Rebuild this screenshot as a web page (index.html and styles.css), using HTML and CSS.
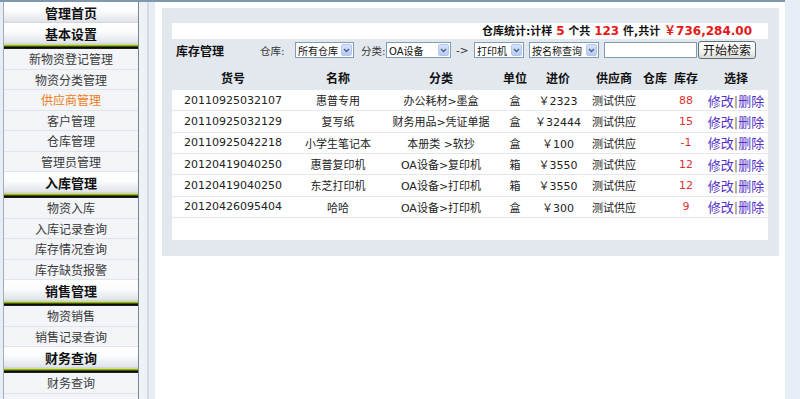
FILE: index.html
```html
<!DOCTYPE html>
<html lang="zh-CN">
<head>
    <meta charset="UTF-8">
    <meta name="viewport" content="width=device-width, initial-scale=1.0">
    <title>库存管理</title>
    <link rel="stylesheet" href="styles.css">
</head>
<body>
    <div class="page">
        <!-- left menu -->
        <div class="side">
            <div class="side-head">管理首页</div>
            <div class="side-head">基本设置</div>
            <div class="side-bar"></div>
            <ul class="side-menu">
                <li>新物资登记管理</li>
                <li>物资分类管理</li>
                <li class="active">供应商管理</li>
                <li>客户管理</li>
                <li>仓库管理</li>
                <li>管理员管理</li>
            </ul>
            <div class="side-head">入库管理</div>
            <div class="side-bar"></div>
            <ul class="side-menu">
                <li>物资入库</li>
                <li>入库记录查询</li>
                <li>库存情况查询</li>
                <li>库存缺货报警</li>
            </ul>
            <div class="side-head">销售管理</div>
            <div class="side-bar"></div>
            <ul class="side-menu">
                <li>物资销售</li>
                <li>销售记录查询</li>
            </ul>
            <div class="side-head">财务查询</div>
            <div class="side-bar"></div>
            <ul class="side-menu">
                <li>财务查询</li>
            </ul>
        </div>

        <div class="gutter"></div>

        <div class="main">
            <div class="panel">
                <div class="stats">仓库统计:计样 <em>5</em> 个共 <em>123</em> 件,共计 <em>￥736,284.00</em></div>

                <div class="search">
                    <span class="title">库存管理</span>
                    <span class="lbl lbl-store">仓库:</span>
                    <span class="sel w59"><span class="sel-text">所有仓库</span><span class="sel-btn"><svg width="7" height="5" viewBox="0 0 7 5"><polyline points="1,1 3.5,3.5 6,1" fill="none" stroke="#4d6185" stroke-width="1.4"/></svg></span></span>
                    <span class="lbl lbl-cat">分类:</span>
                    <span class="sel w65"><span class="sel-text">OA设备</span><span class="sel-btn"><svg width="7" height="5" viewBox="0 0 7 5"><polyline points="1,1 3.5,3.5 6,1" fill="none" stroke="#4d6185" stroke-width="1.4"/></svg></span></span>
                    <span class="lbl arrow">-&gt;</span>
                    <span class="sel w50"><span class="sel-text">打印机</span><span class="sel-btn"><svg width="7" height="5" viewBox="0 0 7 5"><polyline points="1,1 3.5,3.5 6,1" fill="none" stroke="#4d6185" stroke-width="1.4"/></svg></span></span>
                    <span class="sel w70 gap5"><span class="sel-text">按名称查询</span><span class="sel-btn"><svg width="7" height="5" viewBox="0 0 7 5"><polyline points="1,1 3.5,3.5 6,1" fill="none" stroke="#4d6185" stroke-width="1.4"/></svg></span></span>
                    <input type="text" class="keyword">
                    <button class="go">开始检索</button>
                </div>

                <table class="stock">
                    <colgroup>
                        <col style="width:122px">
                        <col style="width:88px">
                        <col style="width:118px">
                        <col style="width:30px">
                        <col style="width:56px">
                        <col style="width:56px">
                        <col style="width:26px">
                        <col style="width:36px">
                        <col style="width:64px">
                    </colgroup>
                    <thead>
                        <tr>
                            <th>货号</th>
                            <th>名称</th>
                            <th>分类</th>
                            <th>单位</th>
                            <th>进价</th>
                            <th>供应商</th>
                            <th>仓库</th>
                            <th>库存</th>
                            <th>选择</th>
                        </tr>
                    </thead>
                    <tbody>
                        <tr>
                            <td>20110925032107</td>
                            <td>惠普专用</td>
                            <td>办公耗材&gt;墨盒</td>
                            <td>盒</td>
                            <td>￥2323</td>
                            <td>测试供应</td>
                            <td></td>
                            <td class="qty">88</td>
                            <td><a href="#">修改</a><span class="sep">|</span><a href="#">删除</a></td>
                        </tr>
                        <tr>
                            <td>20110925032129</td>
                            <td>复写纸</td>
                            <td>财务用品&gt;凭证单据</td>
                            <td>盒</td>
                            <td>￥32444</td>
                            <td>测试供应</td>
                            <td></td>
                            <td class="qty">15</td>
                            <td><a href="#">修改</a><span class="sep">|</span><a href="#">删除</a></td>
                        </tr>
                        <tr>
                            <td>20110925042218</td>
                            <td>小学生笔记本</td>
                            <td>本册类 &gt;软抄</td>
                            <td>盒</td>
                            <td>￥100</td>
                            <td>测试供应</td>
                            <td></td>
                            <td class="qty">-1</td>
                            <td><a href="#">修改</a><span class="sep">|</span><a href="#">删除</a></td>
                        </tr>
                        <tr>
                            <td>20120419040250</td>
                            <td>惠普复印机</td>
                            <td>OA设备&gt;复印机</td>
                            <td>箱</td>
                            <td>￥3550</td>
                            <td>测试供应</td>
                            <td></td>
                            <td class="qty">12</td>
                            <td><a href="#">修改</a><span class="sep">|</span><a href="#">删除</a></td>
                        </tr>
                        <tr>
                            <td>20120419040250</td>
                            <td>东芝打印机</td>
                            <td>OA设备&gt;打印机</td>
                            <td>箱</td>
                            <td>￥3550</td>
                            <td>测试供应</td>
                            <td></td>
                            <td class="qty">12</td>
                            <td><a href="#">修改</a><span class="sep">|</span><a href="#">删除</a></td>
                        </tr>
                        <tr>
                            <td>20120426095404</td>
                            <td>哈哈</td>
                            <td>OA设备&gt;打印机</td>
                            <td>盒</td>
                            <td>￥300</td>
                            <td>测试供应</td>
                            <td></td>
                            <td class="qty">9</td>
                            <td><a href="#">修改</a><span class="sep">|</span><a href="#">删除</a></td>
                        </tr>
                    </tbody>
                    <tfoot>
                        <tr><td colspan="9"></td></tr>
                    </tfoot>
                </table>
            </div>
        </div>
    </div>
</body>
</html>
```

FILE: styles.css
```css
* {
    box-sizing: border-box;
}

body {
    margin: 0;
    background: #e8eef6;
    font-family: "DejaVu Sans", "Noto Sans CJK SC", sans-serif;
    font-size: 11px;
    color: #222;
}

.page {
    display: flex;
    width: 785px;
    height: 399px;
    border-top: 2px solid #8097b0;
}

/* left menu */
.side {
    margin-left: 3px;
    width: 136px;
    border-left: 1px solid #a3adb8;
    border-right: 1px solid #7b8692;
    background: #f3f5f8;
    font-family: "Noto Sans CJK SC", sans-serif;
    font-size: 12px;
}

.side-head {
    height: 21px;
    line-height: 21px;
    text-align: center;
    font-weight: bold;
    font-size: 13px;
    color: #111;
    background: linear-gradient(#ffffff, #fbfcfd 45%, #dfe3e9);
    border-bottom: 1px solid #d2d7de;
}

.side-bar {
    height: 5px;
    background: linear-gradient(#e6efb8 0, #b6d23a 1px, #6f8f10 2px, #151a05 3px, #000 4px, #3a3f44 5px);
}

.side-menu {
    list-style: none;
    margin: 0;
    padding: 0;
}

.side-menu li {
    height: 20.5px;
    line-height: 20px;
    text-align: center;
    color: #3a3a3a;
    border-bottom: 1px solid #e1e5ea;
}

.side-menu li.active {
    color: #ef7d1a;
}

.gutter {
    width: 16px;
    background: linear-gradient(to right, #eef2f7 0, #eef2f7 8px, #d0dae6 8px, #d0dae6 10px, #e8edf4 10px);
}

/* content */
.main {
    width: 630px;
    background: #fff;
    padding: 6px 0 0 7px;
}

.panel {
    width: 617px;
    background: #e3e8ef;
    padding: 15px 11px 16px 10px;
}

.stats {
    height: 16px;
    line-height: 16px;
    background: #fff;
    text-align: right;
    padding-right: 16px;
    font-weight: bold;
    font-size: 11px;
    color: #111;
}

.stats em {
    font-style: normal;
    color: #e41a1a;
    font-size: 12px;
}

.search {
    display: flex;
    align-items: center;
    height: 22px;
    padding-left: 4px;
    color: #333;
    font-size: 10.5px;
}

.search .title {
    width: 48px;
    font-family: "Noto Sans CJK SC", sans-serif;
    font-weight: bold;
    font-size: 12px;
    color: #111;
}

.lbl {
    flex: none;
    white-space: nowrap;
}

.lbl-store {
    margin-left: 36px;
    width: 35px;
}

.lbl-cat {
    margin-left: 7px;
    width: 25px;
}

.arrow {
    margin-left: 5px;
    width: 18px;
}

.sel {
    flex: none;
    display: flex;
    align-items: center;
    height: 16px;
    border: 1px solid #7f9db9;
    background: #fff;
    padding-left: 2px;
    color: #111;
    font-size: 10px;
}

.sel-text {
    flex: 1;
    white-space: nowrap;
    overflow: hidden;
}

.sel-btn {
    flex: none;
    width: 11px;
    height: 12px;
    margin-right: 1px;
    display: flex;
    align-items: center;
    justify-content: center;
    background: linear-gradient(#d7e3fc, #b7caf3);
    border: 1px solid #b3c6ee;
    border-radius: 2px;
}

.w59 { width: 59px; }
.w65 { width: 65px; }
.w50 { width: 50px; }
.w70 { width: 70px; }
.gap5 { margin-left: 5px; }

.keyword {
    margin: 0 0 0 5px;
    width: 93px;
    height: 16px;
    border: 1px solid #7f9db9;
    padding: 0;
}

.go {
    margin-left: 1px;
    width: 58px;
    height: 18px;
    padding: 0;
    border: 1px solid #5f7085;
    border-radius: 3px;
    background: linear-gradient(#ffffff, #f2f2ee 60%, #dcdcd4);
    font-family: "Noto Sans CJK SC", sans-serif;
    font-size: 12px;
    line-height: 14px;
    color: #111;
}

/* table */
.stock {
    width: 596px;
    table-layout: fixed;
    border-collapse: separate;
    border-spacing: 0;
}

.stock thead tr {
    height: 29px;
}

.stock th {
    padding: 4px 0 0;
    font-family: "Noto Sans CJK SC", sans-serif;
    font-size: 12px;
    font-weight: bold;
    color: #111;
}

.stock tbody tr {
    height: 21.33px;
}

.stock td {
    padding: 0;
    text-align: center;
    background: #fff;
    white-space: nowrap;
}

.stock tbody td {
    border-bottom: 1px solid #e4e8ee;
}

.stock tfoot tr {
    height: 22px;
}

.qty {
    color: #e0302e;
}

.stock a {
    color: #5230c8;
    text-decoration: none;
    font-family: "Noto Sans CJK SC", sans-serif;
    font-size: 13px;
}

.sep {
    color: #7d7d55;
    font-size: 13px;
}
```
